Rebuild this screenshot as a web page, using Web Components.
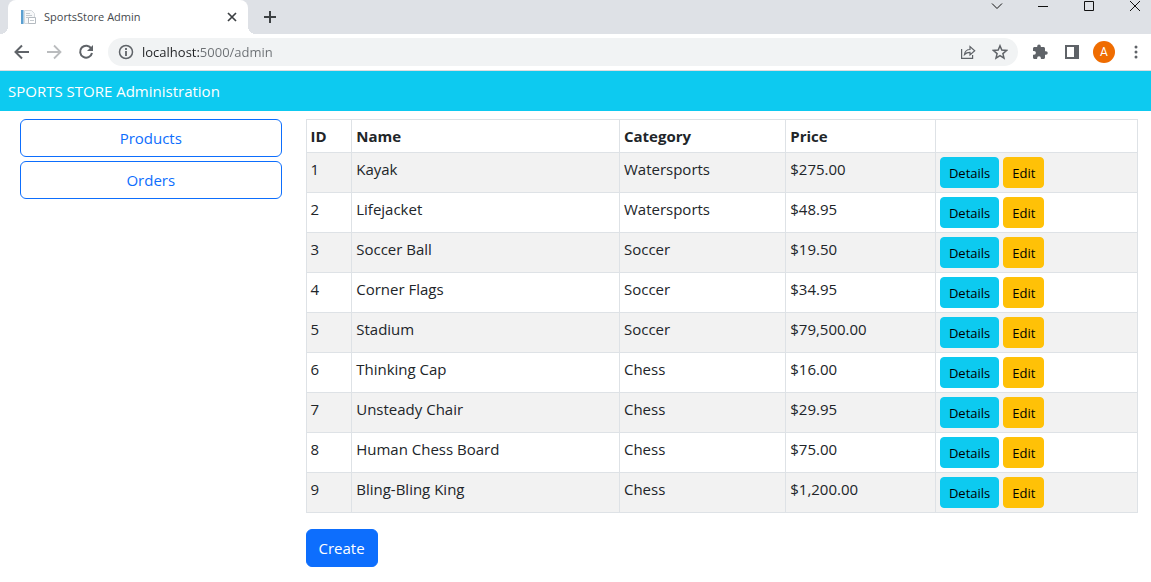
<!DOCTYPE html>
<html lang="en">
<head>
<meta charset="utf-8">
<title>SportsStore Admin</title>
<style>
body { margin: 0; background: #fff; color: #212529; font: 15px/24px "Open Sans", "Noto Sans", sans-serif; }
</style>
</head>
<body>
<browser-frame tab-title="SportsStore Admin" host="localhost" path=":5000/admin">
  <admin-page></admin-page>
</browser-frame>

<template id="frame-template">
<style>
:host { display: block; }
* { box-sizing: border-box; }
button { display: grid; place-items: center; flex: none; padding: 0; border: 0; background: none; color: #5f6368; font: inherit; }
svg { display: block; fill: none; stroke: currentColor; }
svg.filled { stroke: none; }
.strip { display: flex; height: 34px; padding-left: 8px; background: #dee1e6; }
.tab { position: relative; display: flex; align-items: center; width: 240px; padding: 0 8px 0 12px; border-radius: 8px 8px 0 0; background: #fff; color: #45494d; line-height: 16px; }
.tab::before, .tab::after { content: ""; position: absolute; bottom: 0; width: 8px; height: 8px; }
.tab::before { right: 100%; background: radial-gradient(circle at 0 0, transparent 8px, #fff 8px); }
.tab::after { left: 100%; background: radial-gradient(circle at 100% 0, transparent 8px, #fff 8px); }
.title { flex: 1; margin-left: 8px; font-size: 11px; white-space: nowrap; }
.close { width: 16px; height: 16px; color: #3c4043; }
.new { width: 28px; margin-left: 8px; color: #3c4043; }
.window { display: flex; gap: 14px; margin-left: auto; height: 12px; }
.window button { width: 32px; height: 12px; color: #111; }
.bar { display: flex; align-items: center; height: 37px; padding: 0 5px 0 12px; border-bottom: 1px solid #dcdde0; background: #fff; }
.nav { display: flex; gap: 12px; margin-right: 12px; }
.nav button { width: 20px; height: 28px; }
.nav .off { color: #babcbe; }
.address { display: flex; align-items: center; flex: 1; height: 28px; padding: 0 8px 0 10px; border-radius: 14px; background: #f1f3f4; color: #5f6368; }
input { flex: 1; min-width: 0; height: 28px; margin-left: 8px; padding: 0; border: 0; outline: 0; color: #5f6368; font: 13px/20px "Open Sans", "Noto Sans", sans-serif; background: linear-gradient(90deg, #202124 58px, #6b6f73 58px); -webkit-background-clip: text; background-clip: text; -webkit-text-fill-color: transparent; }
.address button { width: 20px; height: 24px; margin-left: 12px; }
.tools { display: flex; align-items: center; gap: 12px; margin-left: 12px; }
.tools button { width: 20px; height: 24px; }
.tools .avatar { width: 22px; height: 22px; border-radius: 50%; background: #ef6c00; color: #fff; font: 12px/22px Roboto, sans-serif; margin: 0 -1px; }
</style>
<div class="strip">
  <div class="tab">
    <svg class="filled" width="16" height="16" viewBox="0 0 16 16"><path d="M4.500 1.500h7l3 3v10h-10z" fill="#f7f8f9" stroke="#d5d9dd"/><path d="M1 1h3v14H1z" fill="#5b9fd0"/><path d="M3 1h1v14H3z" fill="#a7cde8"/><path d="M6 4.500h4M6 6.500h6M6 8.500h2" stroke="#c3c9ce"/><path d="M8.500 8.500h7v6h-7z" fill="#fff" stroke="#b4bac0"/><path d="M10 11.500h4" stroke="#c5cbd0"/></svg>
    <span class="title"></span>
    <button class="close" aria-label="Close tab"><svg width="10" height="10" viewBox="0 0 10 10" stroke-width="1.700"><path d="M1 1l8 8M9 1l-8 8"/></svg></button>
  </div>
  <button class="new" aria-label="New tab"><svg width="12" height="12" viewBox="0 0 12 12" stroke-width="2"><path d="M6 0v12M0 6h12"/></svg></button>
  <div class="window">
    <button aria-label="Search tabs"><svg width="12" height="12" viewBox="0 0 12 12"><path d="M1 3.500l5 5 5-5"/></svg></button>
    <button aria-label="Minimize"><svg width="10" height="12" viewBox="0 0 10 12"><path d="M0 6.500h10"/></svg></button>
    <button aria-label="Maximize"><svg width="10" height="12" viewBox="0 0 10 12"><path d="M.5 1.500h9v9h-9z"/></svg></button>
    <button aria-label="Close window"><svg width="10" height="12" viewBox="0 0 10 12"><path d="M0 1l10 10M10 1L0 11"/></svg></button>
  </div>
</div>
<div class="bar">
  <div class="nav">
    <button aria-label="Back"><svg width="16" height="16" viewBox="0 0 16 16" stroke-width="2"><path d="M15 8H2M8 1.500L1.500 8 8 14.500"/></svg></button>
    <button class="off" aria-label="Forward"><svg width="16" height="16" viewBox="0 0 16 16" stroke-width="1.800"><path d="M1 8h13M8 1.500L14.500 8 8 14.500"/></svg></button>
    <button aria-label="Reload"><svg width="16" height="16" viewBox="0 0 16 16" stroke-width="2"><path d="M13.300 4.600A6 6 0 1 0 14 9"/><path d="M15 1v6H9z" fill="currentColor" stroke="none"/></svg></button>
  </div>
  <div class="address">
    <svg width="16" height="16" viewBox="0 0 16 16" stroke-width="1.500"><circle cx="8" cy="8" r="6.500"/><path d="M8 7v5M8 4v2" stroke-width="1.800"/></svg>
    <input type="text" aria-label="Address">
    <button aria-label="Share"><svg width="16" height="16" viewBox="0 0 16 16" stroke-width="1.200"><path d="M1.600 5v9.400h11V11"/><path d="M4.500 10.500c.5-3.500 2.500-5 5.500-5V2.600l4.700 4.200L10 11V8.300c-2.300 0-4 .6-5.500 2.200z"/></svg></button>
    <button aria-label="Bookmark"><svg width="16" height="16" viewBox="0 0 16 16" stroke-width="1.500"><path d="M8 1.800l1.800 4.300 4.700.4-3.600 3.100 1.100 4.600-4-2.500-4 2.500 1.100-4.600L1.500 6.500l4.700-.4z"/></svg></button>
  </div>
  <div class="tools">
    <button aria-label="Extensions"><svg class="filled" width="16" height="16" viewBox="0 0 16 16"><path fill="currentColor" d="M14 7.300h-1V4.500C13 3.700 12.300 3 11.500 3H8.800V2.200a1.800 1.800 0 0 0-3.600 0V3H2.500C1.700 3 1 3.700 1 4.500v2.400h1a1.900 1.900 0 0 1 0 3.800H1v2.800c0 .8.7 1.500 1.500 1.500h2.600v-.8a1.900 1.900 0 0 1 3.800 0v.8h2.600c.8 0 1.500-.7 1.500-1.500v-2.700h1a1.750 1.750 0 0 0 0-3.500z"/></svg></button>
    <button aria-label="Side panel"><svg width="14" height="14" viewBox="0 0 14 14"><path d="M1 1h12v12H1z" stroke-width="2"/><path d="M9 1h4v12H9z" fill="currentColor" stroke="none"/></svg></button>
    <button class="avatar" aria-label="Profile">A</button>
    <button aria-label="Menu"><svg class="filled" width="4" height="14" viewBox="0 0 4 14"><g fill="currentColor"><circle cx="2" cy="2" r="1.500"/><circle cx="2" cy="7" r="1.500"/><circle cx="2" cy="12" r="1.500"/></g></svg></button>
  </div>
</div>
<slot></slot>
</template>

<template id="page-template">
<style>
:host { display: block; }
header { padding: 8px; background: #0dcaf0; color: #fff; }
.columns { display: grid; grid-template-columns: minmax(0, 1fr) minmax(0, 3fr); padding: 8px 1px 0 8px; }
nav { display: grid; align-content: start; gap: 4px; padding: 0 12px; }
main { padding: 0 12px; }
product-table { margin-bottom: 16px; }
</style>
<header>SPORTS STORE Administration</header>
<div class="columns">
  <nav>
    <link-button class="block" variant="outline" href="#products">Products</link-button>
    <link-button class="block" variant="outline" href="#orders">Orders</link-button>
  </nav>
  <main>
    <product-table></product-table>
    <link-button variant="primary" href="#create">Create</link-button>
  </main>
</div>
</template>

<template id="button-template">
<style>
:host { display: inline-block; vertical-align: top; }
:host(.block) { display: block; }
a { display: block; box-sizing: border-box; padding: 6px 12px; border: 1px solid; border-radius: 6px; line-height: 24px; text-align: center; text-decoration: none; }
:host([variant="outline"]) a { border-color: #0d6efd; color: #0d6efd; }
:host([variant="primary"]) a { border-color: #0d6efd; background: #0d6efd; color: #fff; }
:host([size="small"]) a { padding: 5px 8px 4px; border-radius: 4px; color: #000; font-size: 13px; line-height: 20px; }
:host([variant="info"]) a { border-color: #0dcaf0; background: #0dcaf0; }
:host([variant="warning"]) a { border-color: #ffc107; background: #ffc107; }
</style>
<a><slot></slot></a>
</template>

<template id="table-template">
<style>
:host { display: block; }
table { width: 100%; table-layout: fixed; border-collapse: collapse; }
.id { width: 5.500%; } .name { width: 32.200%; } .category { width: 20%; } .price { width: 18%; }
th, td { padding: 4px; border: 1px solid #dee2e6; text-align: left; vertical-align: top; }
th { font-weight: 700; }
tbody tr:nth-child(odd) { background: #f2f2f2; }
.actions { display: flex; gap: 4px; }
</style>
<table>
  <colgroup><col class="id"><col class="name"><col class="category"><col class="price"><col></colgroup>
  <thead><tr><th scope="col">ID</th><th scope="col">Name</th><th scope="col">Category</th><th scope="col">Price</th><td></td></tr></thead>
  <tbody></tbody>
</table>
</template>

<script>
const stamp = (host, id) => {
  const root = host.attachShadow({ mode: "open" });
  root.append(document.getElementById(id).content.cloneNode(true));
  return root;
};

customElements.define("link-button", class extends HTMLElement {
  connectedCallback() {
    if (this.shadowRoot) return;
    stamp(this, "button-template").querySelector("a").href = this.getAttribute("href");
  }
});

const products = [
  ["Kayak", "Watersports", 275],
  ["Lifejacket", "Watersports", 48.95],
  ["Soccer Ball", "Soccer", 19.5],
  ["Corner Flags", "Soccer", 34.95],
  ["Stadium", "Soccer", 79500],
  ["Thinking Cap", "Chess", 16],
  ["Unsteady Chair", "Chess", 29.95],
  ["Human Chess Board", "Chess", 75],
  ["Bling-Bling King", "Chess", 1200]
];

customElements.define("product-table", class extends HTMLElement {
  connectedCallback() {
    if (this.shadowRoot) return;
    const money = new Intl.NumberFormat("en-US", { style: "currency", currency: "USD" });
    stamp(this, "table-template").querySelector("tbody").innerHTML = products.map(([name, category, price], i) => `
      <tr><td>${i + 1}</td><td>${name}</td><td>${category}</td><td>${money.format(price)}</td>
      <td><div class="actions"><link-button size="small" variant="info" href="#details-${i + 1}">Details</link-button><link-button size="small" variant="warning" href="#edit-${i + 1}">Edit</link-button></div></td></tr>`).join("");
  }
});

customElements.define("admin-page", class extends HTMLElement {
  connectedCallback() {
    if (!this.shadowRoot) stamp(this, "page-template");
  }
});

customElements.define("browser-frame", class extends HTMLElement {
  connectedCallback() {
    if (this.shadowRoot) return;
    const root = stamp(this, "frame-template");
    root.querySelector(".title").textContent = this.getAttribute("tab-title");
    root.querySelector("input").value = this.getAttribute("host") + this.getAttribute("path");
  }
});
</script>
</body>
</html>
